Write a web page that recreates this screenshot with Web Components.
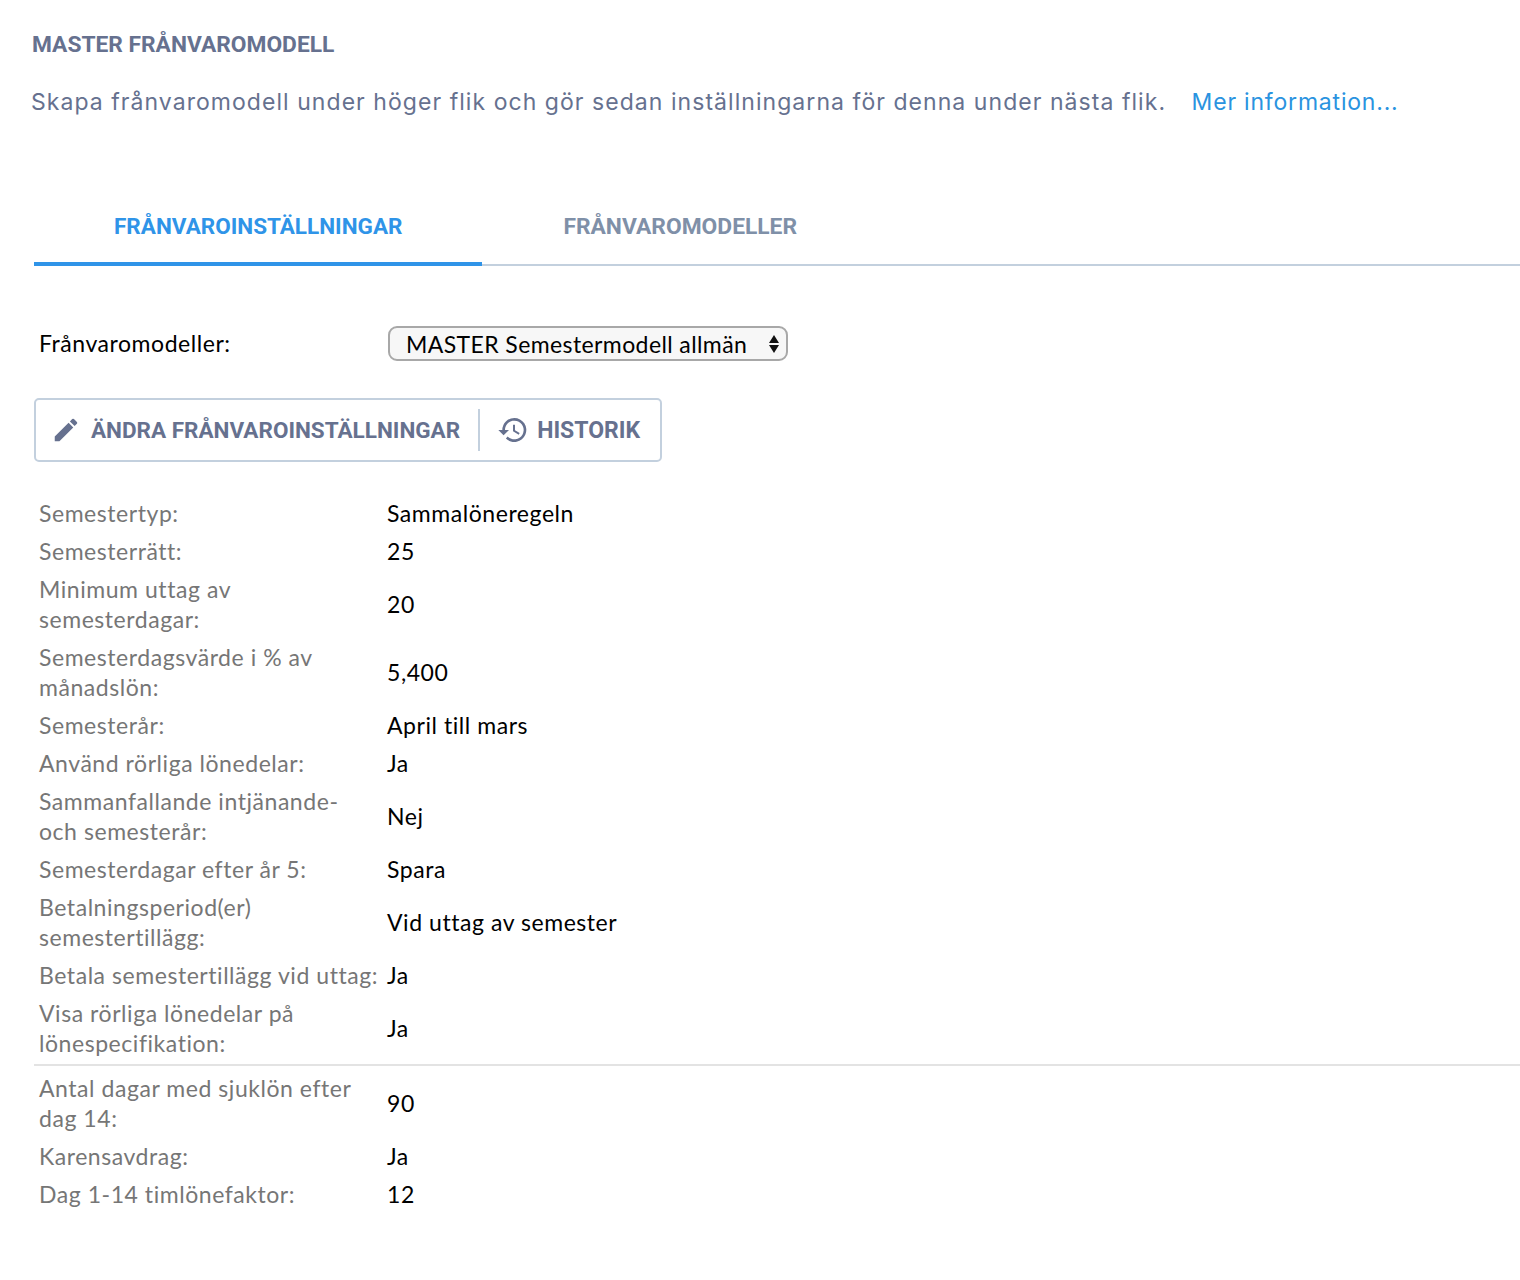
<!DOCTYPE html>
<html lang="sv">
<head>
<meta charset="utf-8">
<title>Master frånvaromodell</title>
<style>
  html, body { margin: 0; padding: 0; background: #fff; }
  body { font-family: Lato, "Liberation Sans", sans-serif; }
</style>
</head>
<body>
<template id="page-header-template">
  <style>
    :host { display: block; padding: 33px 0 0 32px; font-family: Inter, sans-serif; color: #66718f; }
    h1 { margin: 0; font-family: Roboto, sans-serif; font-size: 22.75px; line-height: 24px; font-weight: 700; color: #66718f; }
    p { margin: 31px 0 0 -1px; font-size: 23px; line-height: 28px; letter-spacing: 1.05px; white-space: nowrap; font-weight: 400; }
    ::slotted(a) { color: #2a93e0; text-decoration: none; margin-left: 18px; letter-spacing: 0.8px; }
  </style>
  <h1><slot name="title"></slot></h1>
  <p><slot></slot></p>
</template>

<template id="tab-bar-template">
  <style>
    :host { display: flex; margin: 74px 0 0 34px; height: 76px; border-bottom: 2px solid #c3d0de; box-sizing: border-box; font-family: Roboto, sans-serif; }
  </style>
  <slot></slot>
</template>

<template id="tab-item-template">
  <style>
    :host { display: flex; align-items: center; justify-content: center; height: 76px; box-sizing: border-box; padding: 0 80px 4px 81px; font-size: 22.8px; font-weight: 700; color: #7f90a8; }
    :host([active]) { color: #2f94e8; border-bottom: 4px solid #2f94e8; padding: 0 80px; font-size: 22.5px; }
  </style>
  <slot></slot>
</template>

<template id="model-picker-template">
  <style>
    :host { display: flex; align-items: center; margin: 59px 0 0 39px; height: 36px; font-size: 23px; letter-spacing: 0.55px; color: #000; }
    label { width: 349px; flex: none; }
    .wrap { position: relative; width: 400px; height: 35px; }
    select { appearance: none; -webkit-appearance: none; display: block; width: 100%; height: 100%; box-sizing: border-box; border: 2px solid #a8a8a8; border-radius: 9px; background: #f7f7f7; padding: 1px 30px 0 16px; font: inherit; letter-spacing: 0.4px; color: #000; }
    svg { position: absolute; right: 9px; top: 9px; width: 10px; height: 18px; pointer-events: none; }
  </style>
  <label><slot name="label"></slot></label>
  <div class="wrap">
    <select><option>MASTER Semestermodell allmän</option></select>
    <svg viewBox="0 0 10 18"><path d="M5 0 10 8H0zM5 18 0 10H10z" fill="#111"/></svg>
  </div>
</template>

<template id="action-bar-template">
  <style>
    :host { display: inline-flex; align-items: center; margin: 37px 0 0 34px; height: 64px; box-sizing: border-box; border: 2px solid #c3d0de; border-radius: 5px; font-family: Roboto, sans-serif; }
  </style>
  <slot></slot>
</template>

<template id="action-button-template">
  <style>
    :host { display: flex; align-items: center; height: 42px; font-size: 22.5px; font-weight: 700; color: #66718f; padding: 0 18px 0 15px; gap: 10px; }
    :host([divided]) { border-left: 2px solid #c3d0de; padding-left: 17px; padding-right: 20px; gap: 8px; font-size: 23px; }
    ::slotted(svg) { width: 30px; height: 30px; fill: #66718f; flex: none; }
  </style>
  <slot name="icon"></slot><slot></slot>
</template>

<template id="info-table-template">
  <style>
    :host { display: block; margin: 33px 0 0 34px; font-family: Lato, sans-serif; }
  </style>
  <slot></slot>
</template>

<template id="info-row-template">
  <style>
    :host { display: grid; grid-template-columns: 348px 1fr; align-items: center; padding: 3px 0 5px 5px; font-size: 23px; letter-spacing: 0.55px; line-height: 30px; }
    .label { color: #767676; padding-right: 6px; }
    .value { color: #000; }
  </style>
  <div class="label"><slot name="label"></slot></div>
  <div class="value"><slot></slot></div>
</template>

<template id="info-divider-template">
  <style>
    :host { display: block; height: 2px; background: #e3e3e3; margin: 1px 0 4px; }
  </style>
</template>

<page-header>
  <span slot="title">MASTER FRÅNVAROMODELL</span>
  Skapa frånvaromodell under höger flik och gör sedan inställningarna för denna under nästa flik.
  <a href="#">Mer information...</a>
</page-header>

<tab-bar>
  <tab-item active>FRÅNVAROINSTÄLLNINGAR</tab-item>
  <tab-item>FRÅNVAROMODELLER</tab-item>
</tab-bar>

<model-picker><span slot="label">Frånvaromodeller:</span></model-picker>

<div>
<action-bar>
  <action-button>
    <svg slot="icon" viewBox="0 0 24 24"><path d="M3 17.250V21h3.750L17.810 9.940l-3.750-3.750L3 17.250zM20.710 7.040a1 1 0 0 0 0-1.410l-2.340-2.340a1 1 0 0 0-1.410 0l-1.830 1.830 3.750 3.750 1.830-1.830z"/></svg>
    ÄNDRA FRÅNVAROINSTÄLLNINGAR
  </action-button>
  <action-button divided>
    <svg slot="icon" style="width:32px;height:32px" viewBox="0 0 24 24"><path d="M13 3a9 9 0 0 0-9 9H1l3.890 3.890.07.140L9 12H6a7 7 0 1 1 2.050 4.950l-1.420 1.420A9 9 0 1 0 13 3zm-1 5v5l4.280 2.540.72-1.210-3.500-2.080V8H12z"/></svg>
    HISTORIK
  </action-button>
</action-bar>
</div>

<info-table>
  <info-row><span slot="label">Semestertyp:</span>Sammalöneregeln</info-row>
  <info-row><span slot="label">Semesterrätt:</span>25</info-row>
  <info-row><span slot="label">Minimum uttag av semesterdagar:</span>20</info-row>
  <info-row><span slot="label">Semesterdagsvärde i % av månadslön:</span>5,400</info-row>
  <info-row><span slot="label">Semesterår:</span>April till mars</info-row>
  <info-row><span slot="label">Använd rörliga lönedelar:</span>Ja</info-row>
  <info-row><span slot="label">Sammanfallande intjänande- och semesterår:</span>Nej</info-row>
  <info-row><span slot="label">Semesterdagar efter år 5:</span>Spara</info-row>
  <info-row><span slot="label">Betalningsperiod(er) semestertillägg:</span>Vid uttag av semester</info-row>
  <info-row><span slot="label">Betala semestertillägg vid uttag:</span>Ja</info-row>
  <info-row><span slot="label">Visa rörliga lönedelar på lönespecifikation:</span>Ja</info-row>
  <info-divider></info-divider>
  <info-row><span slot="label">Antal dagar med sjuklön efter dag 14:</span>90</info-row>
  <info-row><span slot="label">Karensavdrag:</span>Ja</info-row>
  <info-row><span slot="label">Dag 1-14 timlönefaktor:</span>12</info-row>
</info-table>

<script>
  // Every element here is only a template in a shadow root, so one helper registers them all.
  function register(name) {
    const template = document.getElementById(name + '-template');
    customElements.define(name, class extends HTMLElement {
      constructor() {
        super();
        this.attachShadow({ mode: 'open' }).appendChild(template.content.cloneNode(true));
      }
    });
  }

  ['page-header', 'tab-bar', 'tab-item', 'model-picker', 'action-bar', 'action-button',
    'info-table', 'info-row', 'info-divider'].forEach(register);
</script>
</body>
</html>
